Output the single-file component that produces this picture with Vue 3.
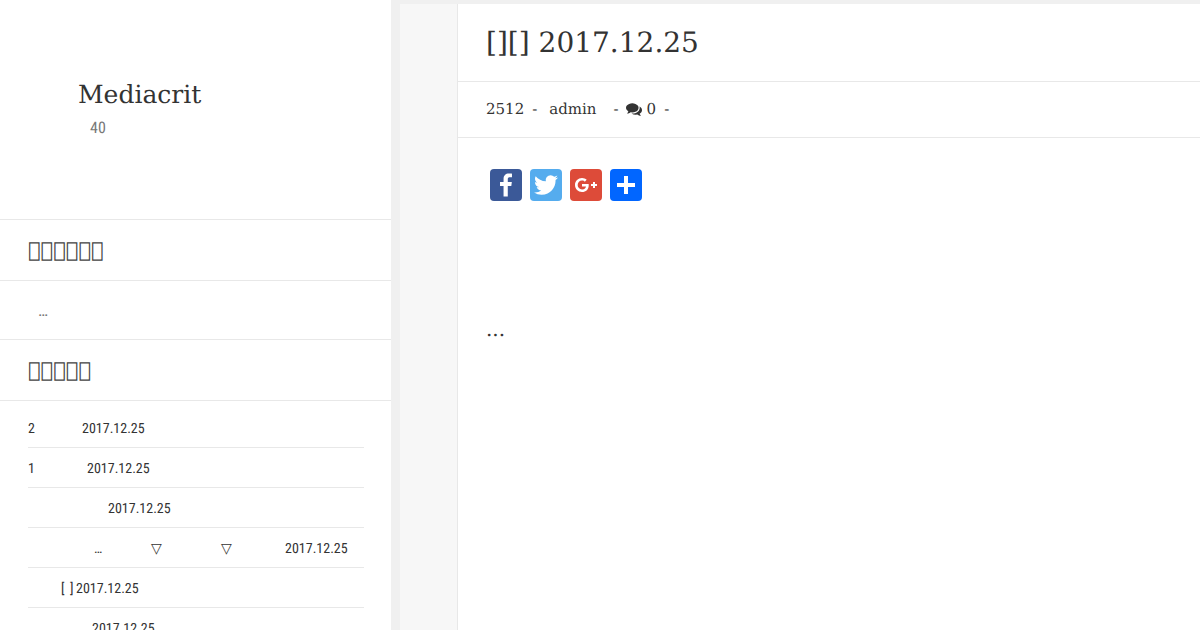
<template>
  <div class="page">
    <aside class="sidebar">
      <header class="brand">
        <h1 class="site-name">Mediacrit</h1>
        <p class="site-count">40</p>
      </header>

      <h2 class="widget-title">{{ tofu(6) }}</h2>
      <div class="widget-body">…</div>
      <h2 class="widget-title">{{ tofu(5) }}</h2>

      <ul class="post-list">
        <li v-for="(row, i) in rows" :key="i" class="post-row">
          <span
            v-for="(seg, j) in row"
            :key="j"
            class="seg"
            :style="{ left: seg[0] + 'px' }"
          >{{ seg[1] }}</span>
        </li>
      </ul>
    </aside>

    <main class="content">
      <div class="gutter"></div>
      <article class="post">
        <h2 class="post-title">[][] 2017.12.25</h2>
        <div class="post-meta">
          <span>2512</span>
          <span class="dash">-</span>
          <span class="author">admin</span>
          <span class="dash wide">-</span>
          <svg class="comment-icon" viewBox="0 0 1792 1792" aria-hidden="true">
            <path d="M1408 768q0 139-94 257t-256.5 186.5-353.5 68.5q-86 0-176-16-124 88-278 128-36 9-86 16h-3q-11 0-20.5-8t-11.5-21q-1-3-1-6.5t.5-6.5 2-6l2.5-5 3.5-5.5 4-5 4.5-5 4-4.5q5-6 23-25t26-29.5 22.5-29 25-38.5 20.5-44q-124-72-195-177t-71-224q0-139 94-257t256.5-186.5 353.5-68.5 353.5 68.5 256.5 186.5 94 257zm384 256q0 120-71 224.5t-195 176.5q10 24 20.5 44t25 38.5 22.5 29 26 29.5 23 25q1 1 4 4.5t4.5 5 4 5 3.5 5.5l2.5 5 2 6 .5 6.5-1 6.5q-3 14-13 22t-22 7q-50-7-86-16-154-40-278-128-90 16-176 16-271 0-472-132 58 4 88 4 161 0 309-45t264-129q125-92 192-212t67-254q0-77-23-152 129 71 204 178t75 230z"/>
          </svg>
          <span>0</span>
          <span class="dash">-</span>
        </div>
        <div class="post-body">
          <div class="share">
            <a class="share-btn fb" href="#">
              <svg viewBox="0 0 32 32"><path d="M17.78 27.5V17.008h3.522l.527-4.09h-4.05v-2.61c0-1.182.33-1.99 2.023-1.99h2.166V4.66c-.375-.05-1.66-.16-3.155-.16-3.123 0-5.26 1.905-5.26 5.405v3.016h-3.53v4.09h3.53V27.5h4.223z"/></svg>
            </a>
            <a class="share-btn tw" href="#">
              <svg viewBox="0 0 32 32"><path d="M28 8.557a9.913 9.913 0 0 1-2.828.775 4.93 4.93 0 0 0 2.166-2.725 9.738 9.738 0 0 1-3.13 1.194 4.92 4.92 0 0 0-3.593-1.55 4.924 4.924 0 0 0-4.794 6.049c-4.09-.21-7.72-2.17-10.15-5.15a4.942 4.942 0 0 0-.665 2.477c0 1.71.87 3.214 2.19 4.1a4.968 4.968 0 0 1-2.23-.616v.06c0 2.39 1.7 4.38 3.952 4.83-.414.115-.85.174-1.297.174-.318 0-.626-.03-.928-.086a4.935 4.935 0 0 0 4.6 3.42 9.893 9.893 0 0 1-6.114 2.107c-.398 0-.79-.023-1.175-.068a13.953 13.953 0 0 0 7.55 2.213c9.056 0 14.01-7.507 14.01-14.013 0-.213-.005-.426-.015-.637.96-.695 1.795-1.56 2.455-2.55z"/></svg>
            </a>
            <a class="share-btn gp" href="#">
              <svg viewBox="0 0 32 32"><path d="M27 15h-2v-2h-2v2h-2v2h2v2h2v-2h2m-15-2v2.4h3.97c-.16 1.03-1.2 3.02-3.97 3.02-2.39 0-4.34-1.98-4.34-4.42s1.95-4.42 4.34-4.42c1.36 0 2.27.58 2.79 1.08l1.9-1.83C15.47 9.69 13.89 9 12 9c-3.87 0-7 3.13-7 7s3.13 7 7 7c4.04 0 6.72-2.84 6.72-6.84 0-.46-.05-.81-.11-1.16H12z"/></svg>
            </a>
            <a class="share-btn more" href="#">
              <svg viewBox="0 0 32 32"><path d="M18 14V7h-4v7H7v4h7v7h4v-7h7v-4h-7z"/></svg>
            </a>
          </div>
          <p class="excerpt">...</p>
        </div>
      </article>
    </main>
  </div>
</template>

<script setup>
const tofu = (n) => '\u{10FFFD}'.repeat(n);

const date = '2017.12.25';
// each segment: [offset inside the row, text]
const rows = [
  [[0, '2'], [54, date]],
  [[0, '1'], [59, date]],
  [[80, date]],
  [[66, '…'], [123, '▽'], [193, '▽'], [257, date]],
  [[33, '['], [42, ']'], [48, date]],
  [[64, date]],
];
</script>

<style scoped>
.page {
  display: flex;
  width: 1200px;
  height: 630px;
  overflow: hidden;
  background: #f0f0f0;
  color: #333;
  font-family: "DejaVu Serif", serif;
  text-rendering: geometricPrecision;
}
.sidebar {
  width: 391px;
  height: 630px;
  flex: none;
  background: #fff;
  overflow: hidden;
}
.brand {
  height: 220px;
  box-sizing: border-box;
  padding: 79px 0 0 78px;
  border-bottom: 1px solid #e8e8e8;
}
.site-name {
  margin: 0;
  font-size: 25px;
  line-height: 32px;
  font-weight: 400;
}
.site-count {
  margin: 7px 0 0 12px;
  font-family: "Roboto Condensed", Roboto, sans-serif;
  font-size: 16px;
  line-height: 20px;
  color: #777;
}
.widget-title {
  margin: 0;
  height: 61px;
  box-sizing: border-box;
  padding-left: 28px;
  border-bottom: 1px solid #e8e8e8;
  font-size: 21px;
  line-height: 60px;
  font-weight: 400;
  color: #444;
}
.widget-body {
  height: 59px;
  box-sizing: border-box;
  padding: 21px 0 0 38px;
  border-bottom: 1px solid #e8e8e8;
  font-family: "Roboto Condensed", Roboto, sans-serif;
  font-size: 17px;
  line-height: 18px;
  color: #777;
}
.post-list {
  list-style: none;
  margin: 0 27px 0 28px;
  padding: 7px 0 0;
}
.post-row {
  position: relative;
  height: 39px;
  border-bottom: 1px solid #e8e8e8;
  font-family: "Roboto Condensed", Roboto, sans-serif;
  font-size: 14px;
  line-height: 42px;
}
.seg {
  position: absolute;
  top: 0;
  white-space: nowrap;
}
.content {
  flex: 1;
  display: flex;
  margin-left: 9px;
  margin-top: 4px;
  background: #fff;
}
.gutter {
  width: 57px;
  flex: none;
  background: #f7f7f7;
  border-right: 1px solid #e8e8e8;
}
.post {
  flex: 1;
  position: relative;
}
.post-title {
  margin: 0;
  height: 78px;
  box-sizing: border-box;
  padding-left: 28px;
  border-bottom: 1px solid #e8e8e8;
  font-size: 28px;
  line-height: 77px;
  font-weight: 400;
}
.post-meta {
  display: flex;
  align-items: center;
  gap: 8px;
  height: 56px;
  box-sizing: border-box;
  padding: 0 0 2px 28px;
  border-bottom: 1px solid #e8e8e8;
  font-size: 15px;
}
.author { margin-left: 4px; }
.dash.wide { margin-left: 9px; }
.comment-icon {
  width: 16px;
  height: 16px;
  fill: #333;
  margin-left: -1px;
  margin-right: -3px;
}
.post-body {
  padding: 31px 0 0 32px;
}
.share {
  display: flex;
  gap: 8px;
}
.share-btn {
  display: block;
  width: 32px;
  height: 32px;
  border-radius: 4px;
}
.share-btn svg {
  display: block;
  width: 32px;
  height: 32px;
  fill: #fff;
}
.fb { background: #3b5998; }
.tw { background: #55acee; }
.gp { background: #dd4b39; }
.more { background: #0166ff; }
.excerpt {
  margin: 114px 0 0 -4px;
  font-size: 20px;
  line-height: 28px;
}
</style>
